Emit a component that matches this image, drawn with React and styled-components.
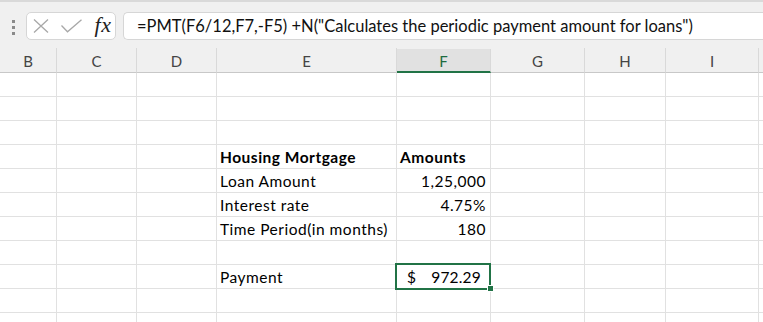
import React from "react";
import styled, { createGlobalStyle } from "styled-components";

const GlobalStyle = createGlobalStyle`
  html, body {
    margin: 0;
    padding: 0;
    background: #ffffff;
    overflow: hidden;
  }
  body {
    font-family: Lato, "Open Sans", sans-serif;
  }
`;

const COLS = [
  { key: "B", width: 57 },
  { key: "C", width: 80 },
  { key: "D", width: 80 },
  { key: "E", width: 180 },
  { key: "F", width: 94 },
  { key: "G", width: 94 },
  { key: "H", width: 81 },
  { key: "I", width: 93 },
  { key: "", width: 20 },
];

const template = COLS.map((c) => `${c.width}px`).join(" ");

const Sheet = styled.div`
  width: 763px;
  height: 322px;
  overflow: hidden;
  background: #ffffff;
`;

const Toolbar = styled.div`
  height: 48px;
  background: #f0f0f0;
  border-top: 2px solid #d9d9d9;
  box-sizing: border-box;
  display: flex;
  align-items: flex-start;
  padding-top: 10px;
`;

const Grip = styled.div`
  width: 26px;
  display: flex;
  flex-direction: column;
  align-items: center;
  gap: 3px;
  padding-top: 8px;

  span {
    width: 3px;
    height: 3px;
    background: #8a8a8a;
  }
`;

const ActionBox = styled.div`
  width: 90px;
  height: 28px;
  box-sizing: border-box;
  background: #ffffff;
  border: 1px solid #d6d6d6;
  border-radius: 5px;
  display: flex;
  align-items: center;
  padding-left: 6px;
`;

const IconSlot = styled.div`
  width: ${(p) => p.$w}px;
  height: 26px;
  display: flex;
  align-items: center;
  justify-content: ${(p) => p.$justify || "flex-start"};
`;

const Fx = styled.span`
  font-family: "Liberation Serif", "DejaVu Serif", serif;
  font-style: italic;
  font-size: 22px;
  color: #222222;
  letter-spacing: 0.5px;
  line-height: 1;
  margin-top: -2px;
`;

const FormulaInput = styled.div`
  flex: 1;
  margin-left: 7px;
  height: 28px;
  box-sizing: border-box;
  background: #ffffff;
  border: 1px solid #d6d6d6;
  border-right: none;
  border-radius: 5px 0 0 5px;
  display: flex;
  align-items: center;
  padding-left: 13px;
  font-family: Lato, "Open Sans", sans-serif;
  font-size: 16.5px;
  color: #111111;
  white-space: nowrap;
`;

const HeaderRow = styled.div`
  display: grid;
  grid-template-columns: ${template};
  height: 25px;
  background: #f0f0f0;
`;

const HeaderCell = styled.div`
  box-sizing: border-box;
  display: flex;
  align-items: center;
  justify-content: center;
  padding-top: 1px;
  font-size: 15px;
  color: ${(p) => (p.$active ? "#1d6b3f" : "#444444")};
  background: ${(p) => (p.$active ? "#e1e1e1" : "transparent")};
  border-right: 1px solid ${(p) => (p.$last ? "transparent" : "#d9d9d9")};
  border-bottom: ${(p) => (p.$active ? "2px solid #217346" : "1px solid #c8c8c8")};
  margin-top: ${(p) => (p.$active ? "1px" : "0")};
`;

const Row = styled.div`
  display: grid;
  grid-template-columns: ${template};
  height: 24px;
`;

const Cell = styled.div`
  position: relative;
  box-sizing: border-box;
  border-right: 1px solid #e1e1e1;
  border-bottom: 1px solid #e1e1e1;
  display: flex;
  align-items: flex-end;
  justify-content: ${(p) => (p.$align === "right" ? "flex-end" : "space-between")};
  padding: 0 4px 2px 3px;
  font-size: 15.5px;
  letter-spacing: 0.5px;
  font-weight: ${(p) => (p.$bold ? 700 : 400)};
  color: #000000;
  white-space: nowrap;
  z-index: ${(p) => (p.$selected ? 2 : 1)};

  ${(p) =>
    p.$selected &&
    `
    &::before {
      content: "";
      position: absolute;
      left: -2px;
      top: -2px;
      right: -1px;
      bottom: -2px;
      border: 2px solid #217346;
      pointer-events: none;
    }
    &::after {
      content: "";
      position: absolute;
      right: -4px;
      bottom: -4px;
      width: 5px;
      height: 5px;
      background: #217346;
      border: 1px solid #ffffff;
    }
  `}
`;

const Accounting = styled.span`
  padding-left: 7px;
  padding-right: 5px;
  flex: 1;
  display: flex;
  justify-content: space-between;
  letter-spacing: 0.2px;
`;

const data = {
  4: { E: { text: "Housing Mortgage", bold: true }, F: { text: "Amounts", bold: true } },
  5: { E: { text: "Loan Amount" }, F: { text: "1,25,000", align: "right" } },
  6: { E: { text: "Interest rate" }, F: { text: "4.75%", align: "right" } },
  7: { E: { text: "Time Period(in months)" }, F: { text: "180", align: "right" } },
  9: { E: { text: "Payment" }, F: { accounting: ["$", "972.29"], selected: true } },
};

const CloseIcon = () => (
  <svg width="16" height="14" viewBox="0 0 16 14">
    <path d="M1 0.5 L15 13.5 M15 0.5 L1 13.5" stroke="#a8a8a8" strokeWidth="1.3" fill="none" />
  </svg>
);

const CheckIcon = () => (
  <svg width="21" height="14" viewBox="0 0 21 14">
    <path d="M0.5 6.5 L6.5 12.8 L20.5 0.8" stroke="#a8a8a8" strokeWidth="1.3" fill="none" />
  </svg>
);

export default function App() {
  const rows = Array.from({ length: 11 }, (_, i) => i + 1);
  return (
    <Sheet>
      <GlobalStyle />
      <Toolbar>
        <Grip>
          <span />
          <span />
          <span />
        </Grip>
        <ActionBox>
          <IconSlot $w={28}>
            <CloseIcon />
          </IconSlot>
          <IconSlot $w={30}>
            <CheckIcon />
          </IconSlot>
          <IconSlot $w={24} $justify="center">
            <Fx>fx</Fx>
          </IconSlot>
        </ActionBox>
        <FormulaInput>
          =PMT(F6/12,F7,-F5) +N("Calculates the periodic payment amount for loans")
        </FormulaInput>
      </Toolbar>
      <HeaderRow>
        {COLS.map((c, i) => (
          <HeaderCell key={i} $active={c.key === "F"} $last={i === COLS.length - 1}>
            {c.key}
          </HeaderCell>
        ))}
      </HeaderRow>
      {rows.map((r) => (
        <Row key={r}>
          {COLS.map((c, i) => {
            const cell = data[r] && data[r][c.key];
            return (
              <Cell
                key={i}
                $bold={cell && cell.bold}
                $align={cell && cell.align}
                $selected={cell && cell.selected}
              >
                {cell && cell.accounting ? (
                  <Accounting>
                    <span>{cell.accounting[0]}</span>
                    <span>{cell.accounting[1]}</span>
                  </Accounting>
                ) : (
                  cell && cell.text
                )}
              </Cell>
            );
          })}
        </Row>
      ))}
    </Sheet>
  );
}
